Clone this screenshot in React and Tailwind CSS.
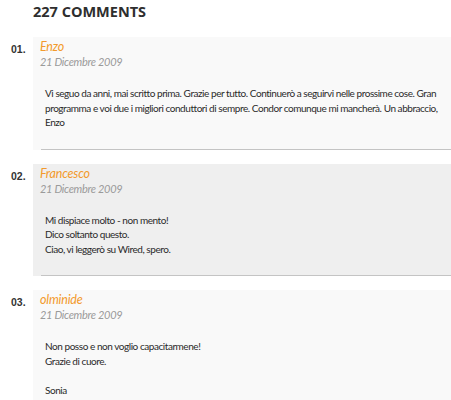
import React from "react";

const comments = [
  {
    n: "01.",
    name: "Enzo",
    date: "21 Dicembre 2009",
    lines: [
      "Vi seguo da anni, mai scritto prima. Grazie per tutto. Continuerò a seguirvi nelle prossime cose. Gran",
      "programma e voi due i migliori conduttori di sempre. Condor comunque mi mancherà. Un abbraccio,",
      "Enzo",
    ],
  },
  {
    n: "02.",
    name: "Francesco",
    date: "21 Dicembre 2009",
    lines: ["Mi dispiace molto - non mento!", "Dico soltanto questo.", "Ciao, vi leggerò su Wired, spero."],
  },
  {
    n: "03.",
    name: "olminide",
    date: "21 Dicembre 2009",
    lines: ["Non posso e non voglio capacitarmene!", "Grazie di cuore.", "", "Sonia"],
  },
];

function Comment({ c, alt }) {
  return (
    <div className="flex">
      <div className="w-[33px] shrink-0 pl-[11px] pt-[4px] text-[10.5px] leading-[16px] font-bold text-[#333] font-['Liberation_Sans',sans-serif]">
        {c.n}
      </div>
      <div className={`flex-1 pt-[2px] ${alt ? "bg-[#efefef]" : "bg-[#f9f9f9]"}`}>
        <div className="pl-[7px] text-[12.5px] leading-[15px] italic tracking-[-0.2px] text-[#f39a2c]">{c.name}</div>
        <div className="pl-[7px] text-[11px] leading-[15px] italic tracking-[-0.3px] text-[#9a9a9a]">{c.date}</div>
        <div className="ml-[8px] mt-[17px] border-b border-[#c4c4c4] pl-[4px] pb-[19px] text-[10px] leading-[14.5px] tracking-[-0.45px] text-[#2a2a2a] whitespace-nowrap">
          {c.lines.map((l, i) => (
            <div key={i} className="h-[14.5px]">{l}</div>
          ))}
        </div>
      </div>
    </div>
  );
}

export default function App() {
  return (
    <div className="w-[451px] h-[400px] overflow-hidden bg-white font-['Lato',sans-serif]">
      <h2 className="pl-[33px] pt-[2px] text-[14.5px] leading-[20px] font-bold text-[#2e2e2e] font-['Open_Sans',sans-serif]">
        227 COMMENTS
      </h2>
      <div className="mt-[15px] flex flex-col gap-[14px]">
        {comments.map((c, i) => (
          <Comment key={i} c={c} alt={i % 2 === 1} />
        ))}
      </div>
    </div>
  );
}
